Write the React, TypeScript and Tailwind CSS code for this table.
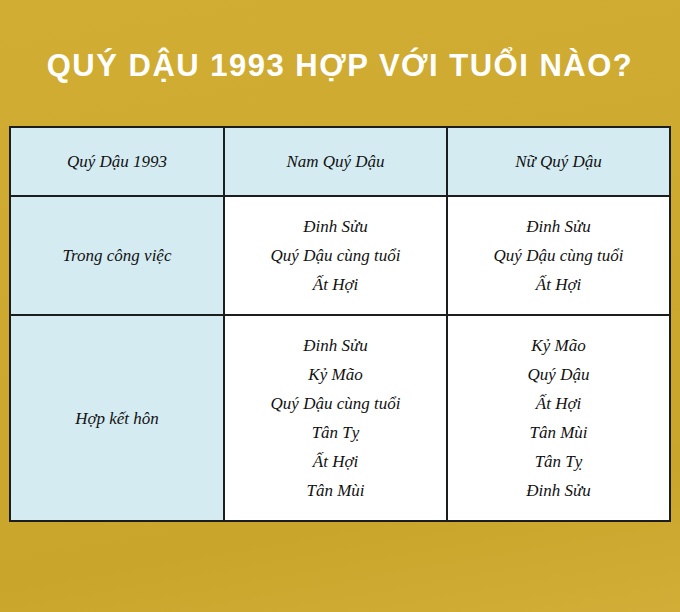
const script = '"Liberation Serif", "DejaVu Serif", serif'

const rows = [
  {
    label: 'Trong công việc',
    nam: ['Đinh Sửu', 'Quý Dậu cùng tuổi', 'Ất Hợi'],
    nu: ['Đinh Sửu', 'Quý Dậu cùng tuổi', 'Ất Hợi'],
    height: 'h-[117px]',
  },
  {
    label: 'Hợp kết hôn',
    nam: ['Đinh Sửu', 'Kỷ Mão', 'Quý Dậu cùng tuổi', 'Tân Tỵ', 'Ất Hợi', 'Tân Mùi'],
    nu: ['Kỷ Mão', 'Quý Dậu', 'Ất Hợi', 'Tân Mùi', 'Tân Tỵ', 'Đinh Sửu'],
    height: 'h-[204px]',
  },
]

function Cell({ children, blue, h }: { children: React.ReactNode; blue?: boolean; h: string }) {
  return (
    <div
      className={`${h} flex flex-col items-center justify-center ${blue ? 'bg-[#d5ebf2]' : 'bg-white'}`}
    >
      {children}
    </div>
  )
}

function Lines({ items }: { items: string[] }) {
  return (
    <>
      {items.map((t, i) => (
        <div key={i} className="h-[29px] leading-[29px] text-[17px] italic text-[#111]">
          {t}
        </div>
      ))}
    </>
  )
}

export default function App() {
  return (
    <div
      className="w-[680px] h-[612px] overflow-hidden flex flex-col bg-[linear-gradient(170deg,#d1ad33_0%,#cca82e_55%,#caa52b_80%,#d2ae38_100%)]"
      style={{ fontFamily: script }}
    >
      <div className="h-[126px] flex items-center justify-center pt-[6px]">
        <h1
          className="whitespace-nowrap text-white text-[31px] font-bold tracking-[1.5px] uppercase"
          style={{ fontFamily: '"Liberation Sans", Arial, sans-serif' }}
        >
          Quý Dậu 1993 hợp với tuổi nào?
        </h1>
      </div>

      <div className="ml-[9px] w-[662px] grid grid-cols-[212px_221px_221px] gap-[2px] p-[2px] bg-[#1b1d1f]">
        <Cell blue h="h-[67px]">
          <Lines items={['Quý Dậu 1993']} />
        </Cell>
        <Cell blue h="h-[67px]">
          <Lines items={['Nam Quý Dậu']} />
        </Cell>
        <Cell blue h="h-[67px]">
          <Lines items={['Nữ Quý Dậu']} />
        </Cell>

        {rows.map((r) => (
          <div key={r.label} className="contents">
            <Cell blue h={r.height}>
              <Lines items={[r.label]} />
            </Cell>
            <Cell h={r.height}>
              <Lines items={r.nam} />
            </Cell>
            <Cell h={r.height}>
              <Lines items={r.nu} />
            </Cell>
          </div>
        ))}
      </div>
    </div>
  )
}
